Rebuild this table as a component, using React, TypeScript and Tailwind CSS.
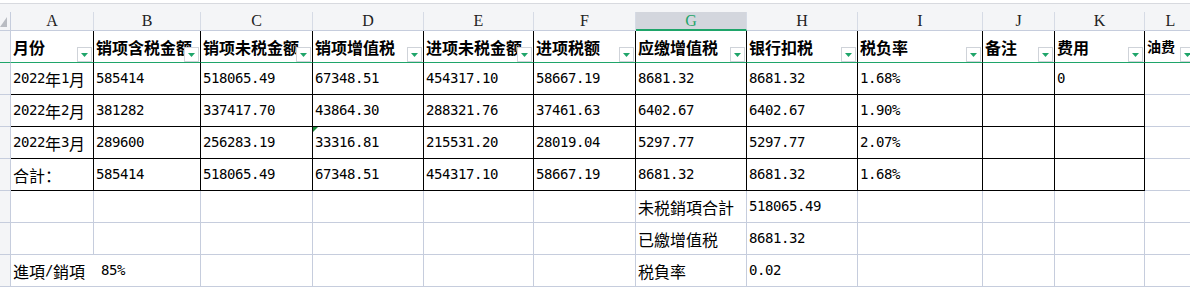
import React from 'react'

const cols = ['A', 'B', 'C', 'D', 'E', 'F', 'G', 'H', 'I', 'J', 'K', 'L']

const heads = ['月份', '销项含税金额', '销项未税金额', '销项增值税', '进项未税金额', '进项税额', '应缴增值税', '银行扣税', '税负率', '备注', '费用', '油费']

const rows: string[][] = [
  ['2022年1月', '585414', '518065.49', '67348.51', '454317.10', '58667.19', '8681.32', '8681.32', '1.68%', '', '0', ''],
  ['2022年2月', '381282', '337417.70', '43864.30', '288321.76', '37461.63', '6402.67', '6402.67', '1.90%', '', '', ''],
  ['2022年3月', '289600', '256283.19', '33316.81', '215531.20', '28019.04', '5297.77', '5297.77', '2.07%', '', '', ''],
  ['合計：', '585414', '518065.49', '67348.51', '454317.10', '58667.19', '8681.32', '8681.32', '1.68%', '', '', ''],
  ['', '', '', '', '', '', '未税銷項合計', '518065.49', '', '', '', ''],
  ['', '', '', '', '', '', '已繳增值税', '8681.32', '', '', '', ''],
  ['進項/銷項  85%', '', '', '', '', '', '税負率', '0.02', '', '', '', ''],
]

// ascii runs get the half-width mono face, the rest stays CJK
function Txt({ s }: { s: string }) {
  const parts = s.split(/([\x20-\x7e]+)/).filter(Boolean)
  return (
    <>
      {parts.map((p, i) =>
        /^[\x20-\x7e]+$/.test(p) ? (
          <span key={i} className="font-['DejaVu_Sans_Mono'] text-[14px] tracking-[-0.43px]">{p}</span>
        ) : (
          <span key={i}>{p}</span>
        )
      )}
    </>
  )
}

function Filter() {
  return (
    <div className="absolute right-px bottom-0 w-[15px] h-[15px] bg-white border border-[#cfd3d9] flex items-center justify-center">
      <svg width="7" height="4" viewBox="0 0 7 4">
        <polygon points="0,0 7,0 3.5,4" fill="#1fa56a" />
      </svg>
    </div>
  )
}

export default function App() {
  return (
    <div className="w-[1190px] h-[287px] overflow-hidden bg-white font-['Noto_Sans_CJK_SC',sans-serif] text-black">
      <div className="h-[4px] bg-white border-b border-[#d8dadf]" />
      <div className="h-[8px] bg-[#f4f5f7]" />
      <div className="grid grid-cols-[11px_83px_107px_112px_111px_110px_102px_111px_111px_125px_72px_90px_52px]">
        {/* column letters */}
        <div className="h-[19px] bg-[#f4f5f7] border-r border-b border-[#c6cddd] relative">
          <svg className="absolute left-0 top-[5px]" width="7" height="10" viewBox="0 0 7 10">
            <polygon points="7,0 7,10 0,10" fill="#b9bcc2" />
          </svg>
        </div>
        {cols.map(c =>
          c === 'G' ? (
            <div key={c} className="h-[19px] bg-[#d3d6dd] border-r border-[#d6dbe5] border-b-2 border-b-[#1fa56a] flex items-center justify-center font-['Liberation_Serif'] text-[16px] text-[#1fa56a] leading-none">
              {c}
            </div>
          ) : (
            <div key={c} className="h-[19px] bg-[#f4f5f7] border-r border-[#d6dbe5] border-b border-b-[#c6cddd] flex items-center justify-center font-['Liberation_Serif'] text-[16px] text-[#222] leading-none">
              {c}
            </div>
          )
        )}

        {/* header row */}
        <div className="h-[32px] bg-[#f4f5f7] border-r border-[#c6cddd] border-b border-b-[#1fa56a]" />
        {heads.map((h, i) => (
          <div
            key={h}
            className={`h-[32px] relative overflow-hidden border-b border-b-[#1fa56a] flex items-center pl-[2px] whitespace-nowrap font-bold ${
              i === 11 ? 'border-r border-r-[#c6cddd] text-[14px]' : 'border-r border-r-black text-[16px]'
            }`}
          >
            {h}
            <Filter />
          </div>
        ))}

        {/* body */}
        {rows.map((r, ri) => (
          <React.Fragment key={ri}>
            <div className="h-[32px] bg-[#f4f5f7] border-r border-b border-[#c6cddd]" />
            {r.map((v, ci) => {
              const boxed = ri < 4 && ci < 11
              const spill = ri === 6 && ci === 0
              const cls = boxed
                ? 'border-r border-b border-black'
                : spill
                  ? 'border-b border-[#c6cddd] overflow-visible z-10'
                  : 'border-r border-b border-[#c6cddd]'
              return (
                <div
                  key={ci}
                  className={`h-[32px] relative flex items-center pl-[2px] whitespace-pre text-[16px] ${spill ? '' : 'overflow-hidden'} ${cls}`}
                >
                  {ri === 2 && ci === 3 && (
                    <svg className="absolute left-0 top-0" width="5" height="5" viewBox="0 0 5 5">
                      <polygon points="0,0 5,0 0,5" fill="#1c8a3c" />
                    </svg>
                  )}
                  <Txt s={v} />
                </div>
              )
            })}
          </React.Fragment>
        ))}
      </div>
    </div>
  )
}
